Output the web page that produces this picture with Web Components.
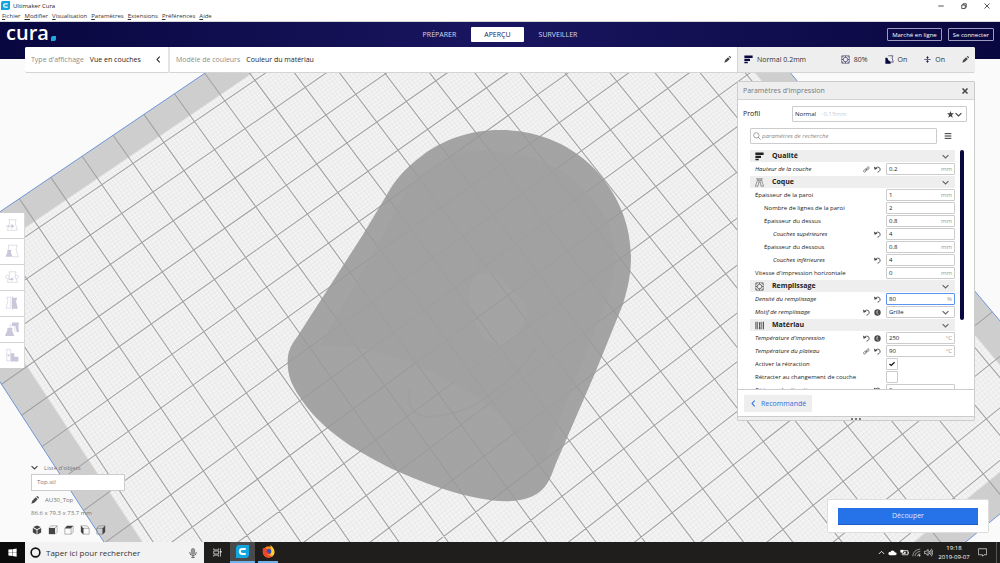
<!DOCTYPE html>
<html lang="fr">
<head>
<meta charset="utf-8">
<meta name="viewport" content="width=device-width, initial-scale=1">
<title>Ultimaker Cura</title>
<style>
html, body { margin: 0; height: 100%; }
body { font-family: "Open Sans", "Noto Sans", sans-serif; font-size: 7px; line-height: 10px; color: #1d1d1d; background: #fafafa; overflow: hidden; }
</style>
</head>
<body>
<cura-desktop></cura-desktop>
<script>
const BASE = `*{box-sizing:border-box} button,input,select{font:inherit;color:inherit;margin:0;padding:0;border:0;background:none;border-radius:0;appearance:none;min-width:0;outline:none} a{color:inherit;text-decoration:none}`;
function component(name, css, html, ready) {
  const tpl = document.createElement('template');
  tpl.innerHTML = `<style>${BASE}${css}</style>${typeof html === 'string' ? html : ''}`;
  customElements.define(name, class extends HTMLElement {
    connectedCallback() {
      if (this.shadowRoot) return;
      const root = this.attachShadow({ mode: 'open' });
      root.append(tpl.content.cloneNode(true));
      if (typeof html === 'function') root.append(document.createRange().createContextualFragment(html(this)));
      if (ready) ready(this, root);
    }
  });
}

/* ---------- icons ---------- */
const trap = 'M7 3H19L17.500 8L21 21H4L8 8Z';
const ICONS = {
  cura: '<path fill="#12a5de" d="M3 0H24V20L20 24H0V4Z"/><path fill="none" stroke="#fff" stroke-width="3.500" d="M18 7.500H12Q7 7.500 7 12T12 16.500H18"/>',
  min: '<path stroke="#222" stroke-width="3" d="M1 12H23"/>',
  max: '<g fill="none" stroke="#222" stroke-width="3"><path d="M3 8H17V22H3Z"/><path d="M8 8V3H21V17H17"/></g>',
  x: '<path stroke="#222" stroke-width="3" d="M2 2L22 22M22 2L2 22"/>',
  close: '<path stroke="#444" stroke-width="6" d="M2 2L22 22M22 2L2 22"/>',
  left: '<path fill="none" stroke="currentColor" stroke-width="3.500" d="M16 2L7 12L16 22"/>',
  down: '<path fill="none" stroke="currentColor" stroke-width="4" d="M2 7L12 17L22 7"/>',
  up: '<path fill="none" stroke="currentColor" stroke-width="3" d="M3 17L12 8L21 17"/>',
  pencil: '<path fill="#4a4a4a" d="M1 23L4 14L14 4L20 10L10 20ZM16 2L18 0Q20 0 22 2T24 6L22 8Z"/>',
  quality: '<path fill="currentColor" d="M1 1H23V8H1ZM1 10H16V16H1ZM1 18H10V22H1Z"/>',
  infill: '<g fill="none" stroke="currentColor" stroke-width="1.500"><rect x="2" y="2" width="20" height="20" stroke-dasharray="3 1"/><circle cx="12" cy="12" r="6"/><path d="M2 7L7 2M2 17L7 22M17 2L22 7M22 17L17 22M2 12H6M18 12H22M12 2V6M12 18V22"/></g>',
  support: '<path fill="none" stroke="currentColor" stroke-width="1.500" d="M9 2H21L19 8L22 19H15"/><path fill="currentColor" d="M1 7H6L9 14L15 18V23H1Z"/>',
  adhesion: '<path fill="none" stroke="currentColor" stroke-width="2" d="M1 12H23M12 0V6M12 18V24"/><path fill="currentColor" d="M7 4H17L12 10ZM7 20H17L12 14Z"/>',
  star: '<path fill="#444" d="M12 0L15 8H24L17 14L20 23L12 18L4 23L7 14L0 8H9Z"/>',
  search: '<g fill="none" stroke="#777" stroke-width="2"><circle cx="10" cy="10" r="8"/><path d="M16 16L23 23"/></g>',
  menu: '<path stroke="#333" stroke-width="3" d="M2 5H22M2 12H22M2 19H22"/>',
  shell: '<g fill="none" stroke="#555" stroke-width="1.500"><path d="M4 2H20M6 2V8L1 22H8L10 11H14L16 22H23L18 8V2M9 5H15V8H9Z"/></g>',
  material: '<g fill="#555"><path d="M1 2H4V22H1ZM6 2H8V22H6ZM10 3H15L14 12L15 22H10L11 12ZM17 2H19V22H17ZM21 2H24V22H21Z"/></g>',
  link: '<g fill="none" stroke="#555" stroke-width="2.200"><rect x="1" y="13" width="11" height="7" rx="3.500" transform="rotate(-40 6 16)"/><rect x="11" y="4" width="11" height="7" rx="3.500" transform="rotate(-40 17 8)"/><path d="M8 16L16 8"/></g>',
  undo: '<path fill="none" stroke="#444" stroke-width="3" d="M5 8Q12 1 18 5Q23 10 20 16Q18 20 12 21"/><path fill="#444" d="M0 2L2 13L12 9Z"/>',
  fx: '<circle cx="12" cy="12" r="11" fill="#4a4a4a"/><path fill="none" stroke="#ddd" stroke-width="2" d="M14 5Q10 5 10 9V14Q10 18 16 18M8 10H14"/>',
  check: '<path fill="none" stroke="#111" stroke-width="5" d="M2 12L9 18L22 5"/>',
  move: `<path d="${trap}" fill="none" stroke="currentColor"/><path fill="none" stroke="currentColor" stroke-width="1.500" d="M2 14H13"/><path fill="currentColor" d="M11 10L16 14L11 18Z"/>`,
  scale: '<path fill="none" stroke="currentColor" d="M6 9V2H21L19 9L23 22H13"/><path fill="currentColor" d="M4 10H11L10 14L13 22H1L4 14Z"/>',
  rotate: `<path d="${trap}" fill="none" stroke="currentColor"/><g fill="#fff" stroke="currentColor"><circle cx="4" cy="12" r="3"/><circle cx="20" cy="12" r="3"/></g><path fill="currentColor" d="M7 15H11V12L15 16L11 19V17H7Z"/>`,
  mirror: '<path fill="none" stroke="currentColor" d="M10 2H3L5 8L2 21H10Z"/><path fill="currentColor" d="M12 0H13V3H21L19 9L22 22H13V24H12Z"/>',
  permodel: '<path fill="currentColor" d="M12 1H24L23 7L24 17H20L18 7H12Z"/><path fill="none" stroke="currentColor" d="M9 9V5H17V17"/><path fill="currentColor" d="M4 10H13L12 14L16 24H0L4 14Z"/>',
  blocker: '<path fill="none" stroke="currentColor" d="M3 2H9V22H3ZM3 12H9"/><path fill="currentColor" d="M10 9H16V15H23V23H10ZM5 11L8 13L5 15Z"/>',
  c3d: '<path fill="#444" d="M12 1L21 5L12 10L3 5ZM2 7L11 12V23L2 18ZM22 7L13 12V23L22 18Z"/>',
  cfront: '<path fill="none" stroke="#555" d="M2 7L7 2H22V17L17 22M17 7L22 2"/><path fill="#444" d="M2 7H17V22H2Z"/>',
  ctop: '<path fill="#444" d="M2 8L7 2H22L17 8Z"/><path fill="none" stroke="#555" d="M2 8H17V22H2ZM22 2V17L17 22"/>',
  cleft: '<path fill="none" stroke="#555" d="M8 8H22V22H8ZM2 2H17L22 8"/><path fill="#444" d="M2 1L8 8V23L2 17Z"/>',
  cright: '<path fill="none" stroke="#555" d="M2 8H16V22H2ZM2 8L7 2H22"/><path fill="#444" d="M16 8L22 1V17L16 23Z"/>',
  win: '<path fill="#fff" d="M1 4L11 3V11H1ZM12 3L23 1V11H12ZM1 12H11V21L1 20ZM12 12H23V23L12 21Z"/>',
  ring: '<circle cx="12" cy="12" r="9.500" fill="none" stroke="#111" stroke-width="3.500"/>',
  mic: '<rect x="8" y="1" width="8" height="14" rx="4" fill="#999" stroke="#444"/><path fill="none" stroke="#444" stroke-width="2" d="M4 10Q4 18 12 18T20 10M12 18V23M8 23H16"/>',
  tasks: '<g fill="none" stroke="#ddd" stroke-width="2"><path d="M2 1V5H15V1M2 23V19H15V23M2 8H15V16H2ZM20 1V23"/></g><path fill="#ddd" d="M18 8H23V12H18Z"/>',
  firefox: '<circle cx="12" cy="13" r="10.500" fill="#ff8a1c"/><path fill="#ffcf33" d="M15 0Q24 6 23 15Q20 24 12 22Q21 15 15 0Z"/><circle cx="12" cy="12" r="5" fill="#324bb5"/><path fill="#f0432b" d="M2 5Q-1 17 8 22Q15 25 20 19Q12 21 9 17Q13 17 14 14Q9 15 8 11L11 9Q7 8 7 5Q4 7 2 5Z"/>',
  cloud: '<path fill="#fff" d="M5 19Q0 18 1 14Q2 10 6 11Q8 5 14 7Q17 8 18 11Q24 11 23 16Q23 19 19 19Z"/>',
  battery: '<path fill="none" stroke="#fff" stroke-width="2" d="M6 7H21V18H6ZM23 10V15"/><path fill="#fff" d="M1 5H9V12H1Z"/><path fill="#fff" d="M11 10H15V15H8V13H11Z"/>',
  wifi: '<g fill="none" stroke="#bbb" stroke-width="2"><path d="M2 22Q3 5 22 3M8 22Q8 11 22 9M14 22Q14 17 22 15"/></g><circle cx="20" cy="20" r="2.500" fill="#ddd"/>',
  volume: '<path fill="none" stroke="#ddd" stroke-width="2" d="M1 9H5L11 4V20L5 15H1ZM14 8Q17 12 14 16M17 5Q22 12 17 19M20 2Q27 12 20 22"/>',
  note: '<path fill="none" stroke="#ddd" stroke-width="2" d="M1 2H23V18H16L12 22V18H1Z"/>'
};
component('cura-icon', `:host{display:block;width:8px;height:8px;flex:none} svg{display:block;width:100%;height:100%}`,
  el => `<svg viewBox="0 0 24 24" aria-hidden="true">${ICONS[el.getAttribute('name')]}</svg>`);

/* ---------- 3D scene: build plate seen in perspective ---------- */
/* [u, v, x, y]: plate cell coordinates and where the camera projects them */
const CAMERA = [
  [0,1,39,228],[0,5,119,347],[0,11,247,536],[-2,6,75,423],[6,1,225,101],[6,5,307,214],
  [14,6,566,74],[14,9,633,158],[12,6,508,116],[13,11,650,237],[10,13,607,363],[8,15,593,472],
  [10,17,703,489],[12,17,763,442],[14,18,848,426],[11,19,783,529],[16,21,983,474],[15,20,928,466],[4,0,144,114],[-3,6,42,446]
];
function fitProjection(points) {
  const n = 8, M = Array.from({ length: n }, () => new Array(n + 1).fill(0));
  const add = (row, rhs) => { for (let i = 0; i < n; i++) { for (let j = 0; j < n; j++) M[i][j] += row[i] * row[j]; M[i][n] += row[i] * rhs; } };
  for (const [u, v, x, y] of points) {
    add([u, v, 1, 0, 0, 0, -u * x, -v * x], x);
    add([0, 0, 0, u, v, 1, -u * y, -v * y], y);
  }
  for (let c = 0; c < n; c++) {
    let p = c;
    for (let r = c; r < n; r++) if (Math.abs(M[r][c]) > Math.abs(M[p][c])) p = r;
    [M[c], M[p]] = [M[p], M[c]];
    for (let r = 0; r < n; r++) if (r !== c) { const f = M[r][c] / M[c][c]; for (let k = c; k <= n; k++) M[r][k] -= f * M[c][k]; }
  }
  const h = M.map((r, i) => r[n] / r[i]);
  return (u, v) => { const w = h[6] * u + h[7] * v + 1; return ((h[0] * u + h[1] * v + h[2]) / w).toFixed(2) + ' ' + ((h[3] * u + h[4] * v + h[5]) / w).toFixed(2); };
}
component('build-scene', `:host{display:block;overflow:hidden} svg{display:block;width:100%;height:100%}`, () => {
  const P = fitProjection(CAMERA), U0 = -3, U1 = 19, V0 = 0, V1 = 22, b = 0.78;
  const quad = (a, c, d, e) => `M${P(a, d)}L${P(c, d)}L${P(c, e)}L${P(a, e)}Z`;
  let minor = '', major = '';
  for (let i = 0; i <= 220; i++) {
    const d = `M${P(U0 + i / 10, V0)}L${P(U0 + i / 10, V1)}M${P(U0, V0 + i / 10)}L${P(U1, V0 + i / 10)}`;
    if (i % 10) minor += d; else if (i % 220) major += d;
  }
  return `<svg viewBox="0 22 1000 520" preserveAspectRatio="xMidYMid slice" aria-hidden="true">
    <rect y="22" width="1000" height="520" fill="#fafafa"/>
    <path d="${quad(U0, U1, V0, V1)}" fill="#f3f3f3"/>
    <path d="${minor}" stroke="#e0e0e0" stroke-width=".5" fill="none"/>
    <path fill-rule="evenodd" fill="#c6c6c6" fill-opacity=".8" d="${quad(U0, U1, V0, V1)}${quad(U0 + b, U1 - b, V0 + b, V1 - b)}"/>
    <path d="${major}" stroke="#a2a2a2" stroke-width="1.100" fill="none"/>
    <path d="${quad(U0, U1, V0, V1)}" fill="none" stroke="#6f96d8"/>
    <g transform="translate(270 110) scale(.33333)">
      <path fill="#989898" fill-opacity=".88" d="M690 60C600 60 515 90 455 138C405 175 375 210 350 255L278 375L85 675C60 710 52 725 53 765C55 815 80 850 110 890C180 980 290 1040 385 1085C500 1135 610 1170 705 1174C770 1175 810 1155 832 1120C845 1098 850 1080 858 1060L975 790L1058 585C1075 530 1083 490 1083 440C1080 350 1055 280 1000 207C925 110 810 60 690 60Z"/>
      <path fill="#a0a0a0" fill-opacity=".6" fill-rule="evenodd" d="M640 122C540 125 470 165 410 240C380 290 355 350 325 400L150 708C240 700 380 735 470 780C560 820 680 890 710 940C760 1000 790 1060 820 1060L880 900L1000 600C1040 500 1050 420 1010 330C950 210 820 120 640 122ZM640 488C600 500 590 540 600 580C615 620 620 700 690 705C740 690 775 640 770 590C765 560 720 550 700 510C680 495 660 485 640 488Z"/>
      <path fill="none" stroke="#989898" stroke-opacity=".3" stroke-width="5" d="M420 840Q405 925 490 920Q600 905 650 860Q740 800 800 710"/>
    </g></svg>`;
});

/* ---------- window chrome ---------- */
component('title-bar', `
:host{display:flex;align-items:center;height:11px;padding:0 10px 0 1px;gap:3px;background:#fff;color:#222;font-size:6px;line-height:12px}
.s{flex:1} div{display:flex;gap:17px} button cura-icon{width:6px;height:6px} .logo{width:9px;height:9px}`,
`<cura-icon class="logo" name="cura"></cura-icon><span>Ultimaker Cura</span><span class="s"></span>
<div><button aria-label="Réduire"><cura-icon name="min"></cura-icon></button><button aria-label="Agrandir"><cura-icon name="max"></cura-icon></button><button aria-label="Fermer"><cura-icon name="x"></cura-icon></button></div>`);

component('menu-bar', `
:host{display:block;height:11px;background:#fff;border-bottom:1px solid #d8d8d8;font-size:6px;color:#333}
nav{display:flex;gap:4px;padding:0 2px;line-height:11px} a::first-letter{text-decoration:underline}`,
`<nav><a href="#">Fichier</a><a href="#">Modifier</a><a href="#">Visualisation</a><a href="#">Paramètres</a><a href="#">Extensions</a><a href="#">Préférences</a><a href="#">Aide</a></nav>`);

component('app-header', `
:host{display:block;height:37px;background:linear-gradient(90deg,#08073f,#191660 50%,#08073f);color:#d8d8ea}
.row{display:grid;grid-template-columns:1fr auto 1fr;align-items:center;height:25px;padding:0 6px}
.logo{display:flex;align-items:flex-end;gap:2px;color:#fff;font-size:20px;font-weight:600;line-height:20px;height:25px;padding-bottom:4px}
.logo i{width:5px;height:5px;margin-bottom:2px;background:#1fa8e0;border-radius:2px 0 2px 0}
nav{display:flex;gap:15px} nav a{height:15px;line-height:15px;font-size:7px} nav .on{background:#fff;color:#191660;padding:0 13px;border-radius:1px}
.acts{display:flex;justify-content:flex-end;gap:6px} button{height:13px;border:1px solid #9d9cc0;border-radius:1px;padding:0 4px;font-size:6px;color:#fff;line-height:10px}`,
`<div class="row"><div class="logo"><span>cura</span><i></i></div>
<nav><a href="#">PRÉPARER</a><a class="on" href="#" aria-current="page">APERÇU</a><a href="#">SURVEILLER</a></nav>
<div class="acts"><button>Marché en ligne</button><button>Se connecter</button></div></div>`);

/* ---------- stage bar ---------- */
component('stage-bar', `
:host{display:grid;grid-template-columns:143px 1fr 238px;height:26px;font-size:7px;background:#e4e4e4;border-radius:2px}
div{display:flex;align-items:center;gap:6px;padding:0 6px;background:#fff;border-bottom:1px solid #d4d4d4}
.a{border-radius:2px 0 0 2px} .b{margin-left:2px} .c{background:#eee;border-left:1px solid #d4d4d4;color:#333;border-radius:0 2px 2px 0}
.m{color:#8c8c8c} .s{flex:1} cura-icon{width:7px;height:7px} .n{color:#08073f} .q{width:9px;height:9px}
span.g{display:flex;align-items:center;gap:4px} .c{gap:17px} .c .s{margin:0 -17px}`,
`<div class="a"><span class="m">Type d'affichage</span><span>Vue en couches</span><span class="s"></span><cura-icon name="left"></cura-icon></div>
<div class="b"><span class="m">Modèle de couleurs</span><span>Couleur du matériau</span><span class="s"></span><cura-icon name="pencil"></cura-icon></div>
<div class="c"><span class="g"><cura-icon class="n q" name="quality"></cura-icon>Normal 0.2mm</span><span class="s"></span>
<span class="g"><cura-icon class="n q" name="infill"></cura-icon>80%</span><span class="g"><cura-icon class="n q" name="support"></cura-icon>On</span><span class="g"><cura-icon class="n" name="adhesion"></cura-icon>On</span><cura-icon name="pencil"></cura-icon></div>`);

/* ---------- side tools ---------- */
component('tool-column', `
:host{display:flex;flex-direction:column;gap:1px;width:25px;background:#d2d2d2;border-radius:0 2px 2px 0;border-right:1px solid #d8d8d8}
button{height:25px;background:#fff;display:grid;place-items:center;color:#c9c8da} cura-icon{width:14px;height:14px}`,
['move:Déplacer', 'scale:Mettre à l’échelle', 'rotate:Pivoter', 'mirror:Miroir', 'permodel:Paramètres par modèle', 'blocker:Bloqueur de support']
  .map(t => t.split(':')).map(([i, l]) => `<button aria-label="${l}"><cura-icon name="${i}"></cura-icon></button>`).join(''));

/* ---------- settings ---------- */
component('setting-category', `
:host{display:block;height:12px}
button{display:grid;grid-template-columns:17px 1fr 8px;align-items:center;width:100%;height:12px;padding:0 5px 0 5px;background:#eee;text-align:left;font-weight:700;font-size:7px;line-height:12px;color:#222}
.i{width:9px;height:9px} .d{width:7px;height:7px;color:#666}`,
el => `<button aria-expanded="true"><cura-icon class="i" name="${el.getAttribute('icon')}"></cura-icon><span>${el.getAttribute('label')}</span><cura-icon class="d" name="down"></cura-icon></button>`);

component('setting-row', `
:host{display:grid;grid-template-columns:1fr auto 69px;gap:5px;height:12px;align-items:center;font-size:6px;line-height:10px;color:#222}
label{white-space:nowrap;padding-left:5px} :host([level="1"]) label{padding-left:14px} :host([level="2"]) label{padding-left:23px} :host([custom]) label{font-style:italic}
.icons{display:flex;gap:4px} .icons cura-icon{width:7px;height:7px}
.box{display:flex;align-items:center;height:12px;border:1px solid #ccc;background:#fff;padding:0 2px;border-radius:1px} .box.focus{border-color:#5a94f0}
input,select{flex:1;width:0;height:10px;line-height:10px} .unit{color:#999} .box cura-icon{width:7px;height:7px;color:#666;margin-right:3px}
.tick{display:grid;width:12px;height:12px} .tick input{width:12px;height:12px;border:1px solid #ccc;background:#fff;border-radius:1px} .tick>*{grid-area:1/1} .tick cura-icon{width:6px;height:6px;place-self:center}`,
el => {
  const g = n => el.getAttribute(n) || '', kind = g('kind');
  const icons = g('icons').split(' ').filter(Boolean).map(n => `<cura-icon name="${n}"></cura-icon>`).join('');
  let field;
  if (kind === 'check') field = `<span class="tick"><input id="f" type="checkbox" ${el.hasAttribute('checked') ? 'checked' : ''}>${el.hasAttribute('checked') ? '<cura-icon name="check"></cura-icon>' : ''}</span>`;
  else if (kind === 'select') field = `<span class="box"><select id="f"><option>${g('value')}</option></select><cura-icon name="down"></cura-icon></span>`;
  else field = `<span class="box ${el.hasAttribute('active') ? 'focus' : ''}"><input id="f" type="text" value="${g('value')}"><span class="unit">${g('unit')}</span></span>`;
  return `<label for="f">${g('label')}</label><span class="icons">${icons}</span>${field}`;
});

component('settings-panel', `
:host{display:flex;flex-direction:column;min-height:0;background:#fff;border:1px solid #ccc;border-radius:1px;color:#222}
header{display:flex;justify-content:space-between;align-items:center;height:18px;padding:0 6px 0 5px;background:#eee;border-bottom:1px solid #d4d4d4;color:#777;font-size:7px} header cura-icon{width:6px;height:6px}
.profile{display:grid;grid-template-columns:44px 1fr;align-items:center;gap:5px;margin:6px 7px 6px 5px;font-size:7px}
.pick{display:grid;grid-template-columns:27px 1fr auto;align-items:center;height:16px;border:1px solid #ccc;font-size:6px;border-radius:1px}
.pick select{grid-area:1/1/2/4;height:14px;padding-left:2px} .pick .q{grid-area:1/2;color:#ccc} .pick .k{grid-area:1/3;display:flex;gap:1px;padding-right:4px;color:#444} .k cura-icon{width:7px;height:7px}
.find{display:grid;grid-template-columns:1fr 8px;gap:7px;align-items:center;margin:0 22px 6px 12px}
.find label{display:flex;align-items:center;gap:1px;height:16px;border:1px solid #ccc;padding:0 2px;border-radius:1px} .find input{flex:1;font-size:6px;font-style:italic;height:14px} .find input::placeholder{color:#888}
.body{flex:1;min-height:0;overflow:hidden;display:grid;grid-template-columns:1fr 4px;gap:5px;margin:0 10px 0 12px}
.list{min-height:0;display:flex;flex-direction:column;gap:1px;overflow:hidden} .list>*{flex:none} .bar{height:71%;background:#08073f;border-radius:2px}
footer{border-top:1px solid #ccc;padding:5px 6px 4px} footer button{display:flex;align-items:center;gap:4px;height:17px;padding:0 6px;background:#eee;color:#2a6fe0;font-size:7px;border-radius:1px} footer cura-icon{width:7px;height:7px}
.grip{height:4px;background:#eee;border-top:1px solid #ccc;display:flex;justify-content:center;align-items:center;gap:2px} .grip i{width:2px;height:2px;border-radius:1px;background:#555}`,
`<header><span>Paramètres d'impression</span><button aria-label="Fermer"><cura-icon name="close"></cura-icon></button></header>
<div class="profile"><label for="p">Profil</label><span class="pick"><select id="p"><option>Normal</option></select><span class="q">- 0.15mm</span><span class="k"><cura-icon name="star"></cura-icon><cura-icon name="down"></cura-icon></span></span></div>
<div class="find"><label><cura-icon name="search"></cura-icon><input type="text" placeholder="paramètres de recherche" aria-label="Rechercher"></label><button aria-label="Visibilité"><cura-icon name="menu"></cura-icon></button></div>
<div class="body"><div class="list">
<setting-category icon="quality" label="Qualité"></setting-category>
<setting-row custom label="Hauteur de la couche" icons="link undo" value="0.2" unit="mm"></setting-row>
<setting-category icon="shell" label="Coque"></setting-category>
<setting-row label="Épaisseur de la paroi" value="1" unit="mm"></setting-row>
<setting-row level="1" label="Nombre de lignes de la paroi" value="2"></setting-row>
<setting-row level="1" label="Épaisseur du dessus" value="0.8" unit="mm"></setting-row>
<setting-row level="2" custom label="Couches supérieures" icons="undo" value="4"></setting-row>
<setting-row level="1" label="Épaisseur du dessous" value="0.8" unit="mm"></setting-row>
<setting-row level="2" custom label="Couches inférieures" icons="undo" value="4"></setting-row>
<setting-row label="Vitesse d'impression horizontale" value="0" unit="mm"></setting-row>
<setting-category icon="infill" label="Remplissage"></setting-category>
<setting-row custom active label="Densité du remplissage" icons="undo" value="80" unit="%"></setting-row>
<setting-row custom kind="select" label="Motif de remplissage" icons="undo fx" value="Grille"></setting-row>
<setting-category icon="material" label="Matériau"></setting-category>
<setting-row custom label="Température d'impression" icons="undo fx" value="250" unit="°C"></setting-row>
<setting-row custom label="Température du plateau" icons="link undo" value="90" unit="°C"></setting-row>
<setting-row kind="check" checked label="Activer la rétraction"></setting-row>
<setting-row kind="check" label="Rétracter au changement de couche"></setting-row>
<setting-row custom label="Distance de rétraction" icons="undo" value="2" unit="mm"></setting-row>
</div><div class="bar"></div></div>
<footer><button><cura-icon name="left"></cura-icon>Recommandé</button></footer><div class="grip"><i></i><i></i><i></i></div>`);

/* ---------- object list and slice action ---------- */
component('object-info', `
:host{display:block;width:94px;color:#777;font-size:6px}
.t{display:flex;align-items:center;gap:6px;height:13px;color:#777} .t cura-icon{color:#444;width:7px;height:7px}
.o{display:block;width:100%;height:17px;border:1px solid #ccc;background:#fff;text-align:left;padding:0 5px;line-height:15px}
.n{display:flex;align-items:center;gap:6px;height:18px} p{margin:0;height:10px;line-height:8px;white-space:nowrap} .v{display:flex;gap:6px;margin:6px 0 0 1px} .v cura-icon{width:10px;height:10px} button{display:block}`,
`<button class="t"><cura-icon name="down"></cura-icon>Liste d'objets</button><button class="o">Top.stl</button>
<div class="n"><cura-icon name="pencil"></cura-icon><span>AU30_Top</span></div><p>86.6 x 79.3 x 73.7 mm</p>
<div class="v">${['3d:3D', 'front:avant', 'top:haut', 'left:gauche', 'right:droite'].map(s => s.split(':')).map(([i, l]) => `<button aria-label="Vue ${l}"><cura-icon name="c${i}"></cura-icon></button>`).join('')}</div>`);

component('slice-action', `
:host{display:block;width:162px;padding:8px 10px 7px;background:#fff;border:1px solid #ddd;border-radius:2px}
button{display:block;width:100%;height:17px;background:#2672e8;color:#dfeaff;font-size:7px;border-bottom:1px solid #1c5cc0}`,
`<button>Découper</button>`);

component('task-bar', `
:host{display:flex;height:21px;background:#1f1e1d;color:#fff;font-size:6px}
button{display:grid;place-items:center;width:25px} .w{background:#0b0b0b} .w cura-icon{width:9px;height:9px}
label{display:flex;align-items:center;gap:5px;width:179px;padding:0 6px 0 5px;background:#f2f2f2;color:#333} label cura-icon{width:11px;height:11px} label input{flex:1;font-size:8px;height:19px} label input::placeholder{color:#333;opacity:1} .mic{width:10px;height:10px}
.app{border-bottom:2px solid #6fb3ea} .on{background:#4a4a4a;width:25px} .app cura-icon{width:13px;height:13px} .ff{width:20px;margin-left:3px} .task cura-icon{width:9px;height:9px}
.s{flex:1} .tray{display:flex;align-items:center;gap:3px;margin-right:2px} .tray cura-icon{width:9px;height:9px} time{width:38px;text-align:center;line-height:9px;align-self:center} .end{width:18px} .end cura-icon{width:9px;height:9px} .tray .up{width:7px;height:7px} i{width:4px;border-left:1px solid #555;margin-left:5px} .task{width:26px}`,
`<button class="w" aria-label="Démarrer"><cura-icon name="win"></cura-icon></button>
<label><cura-icon name="ring"></cura-icon><input type="text" placeholder="Taper ici pour rechercher" aria-label="Rechercher"><cura-icon class="mic" name="mic"></cura-icon></label>
<button class="task" aria-label="Vue des tâches"><cura-icon name="tasks"></cura-icon></button><button class="app on" aria-label="Cura"><cura-icon name="cura"></cura-icon></button><button class="app ff" aria-label="Firefox"><cura-icon name="firefox"></cura-icon></button>
<span class="s"></span><span class="tray"><cura-icon class="up" name="up"></cura-icon><cura-icon name="cloud"></cura-icon><cura-icon name="battery"></cura-icon><cura-icon name="wifi"></cura-icon><cura-icon name="volume"></cura-icon></span>
<time>19:18<br>2019-09-07</time><button class="end" aria-label="Notifications"><cura-icon name="note"></cura-icon></button><i></i>`);

/* ---------- desktop ---------- */
component('cura-desktop', `
:host{display:grid;grid-template-rows:11px 11px minmax(0,1fr) 21px;height:100vh}
main{display:grid;grid-template:minmax(0,1fr)/minmax(0,1fr);min-height:0} main>*{grid-area:1/1;min-height:0}
app-header{align-self:start} .over{display:grid;grid-template:26px minmax(0,1fr)/minmax(0,1fr) 238px;padding:25px 25px 0}
stage-bar{grid-column:1/3} object-info{align-self:end;margin:0 0 7px 6px}
.right{display:flex;flex-direction:column;min-height:0;padding:8px 0 9px} settings-panel{flex:1} slice-action{margin:78px -14px 0 0;align-self:flex-end}
tool-column{align-self:center;margin-top:16px}`,
`<title-bar></title-bar><menu-bar></menu-bar>
<main><build-scene></build-scene><app-header></app-header>
<div class="over"><stage-bar></stage-bar><object-info></object-info><div class="right"><settings-panel></settings-panel><slice-action></slice-action></div></div>
<tool-column></tool-column></main><task-bar></task-bar>`);
</script>
</body>
</html>
